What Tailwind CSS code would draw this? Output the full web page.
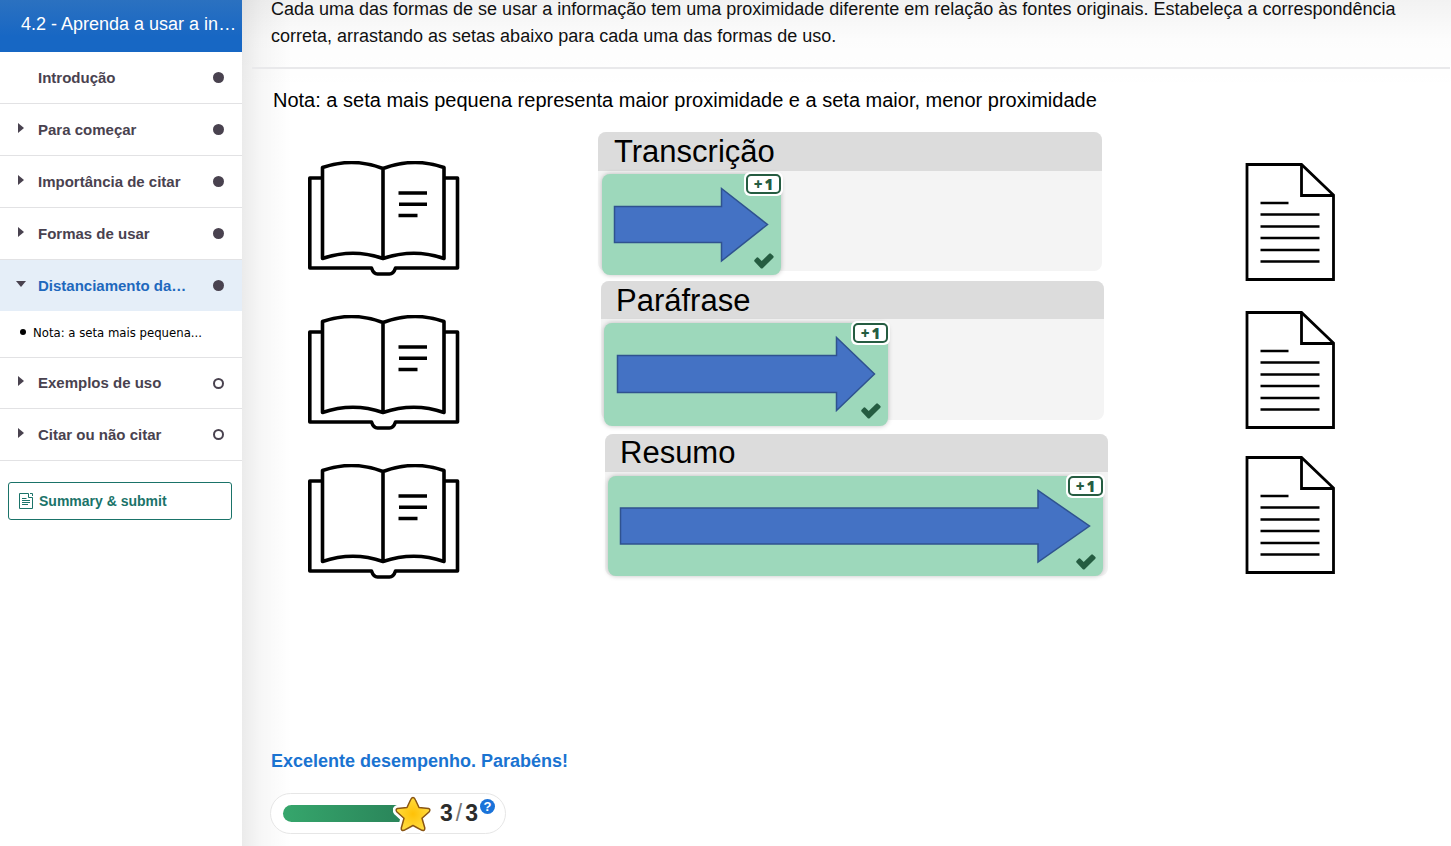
<!DOCTYPE html>
<html lang="pt">
<head>
<meta charset="utf-8">
<meta name="viewport" content="width=device-width, initial-scale=1">
<title>4.2 - Aprenda a usar a informação</title>
<script src="https://cdn.jsdelivr.net/npm/@tailwindcss/browser@4"></script>
</head>
<body class="bg-white font-['Liberation_Sans',Arial,sans-serif] text-black">
<svg class="hidden" aria-hidden="true">
  <symbol id="book" viewBox="0 0 152 116">
    <g fill="none" stroke="#000" stroke-width="3.6" stroke-linejoin="round">
      <path d="M14 17H1.800V107H63.500Q65.500 113 69.500 113H81.500Q85.500 113 87.500 107H149.500V17H136.500"/>
      <path d="M75 7.500Q45 -4 14.500 6.500V97.500Q45 87 75 97.500Q106 87 136 97.500V6.500Q106 -4 75 7.500V97.500"/>
      <path d="M90.500 32H119M91 43.300H119M90.500 54.500H109.500"/>
    </g>
  </symbol>
  <symbol id="doc" viewBox="0 0 90 119">
    <g fill="none" stroke="#000" stroke-width="2.800">
      <path d="M2 1.500H56.500L88.500 32V116.500H2Z"/>
      <path d="M56.500 1.500V32.500H88.500"/>
      <path stroke-width="2.500" d="M15.500 40H43.500M15.500 51.500H74.500M15.500 63.500H74.500M15.500 75H74.500M15.500 87H74.500M15.500 98.500H74.500"/>
    </g>
  </symbol>
  <symbol id="check" viewBox="0 0 20 16"><path fill="#255c41" d="M0.500 8.500Q-.2 7.500 .6 6.800L2.800 4.600Q3.600 4 4.400 4.700L7.700 8L15.200 .7Q16 0 16.900 .7L19.400 3Q20 3.900 19.300 4.800L8.700 15.200Q7.700 16 6.800 15.200Z"/></symbol>
  <symbol id="caret" viewBox="0 0 6 10"><path fill="#49424f" d="M0 0L6 5L0 10Z"/></symbol>
</svg>
<div class="flex min-h-screen">
  <aside class="w-[242px] shrink-0 bg-white">
    <h1 class="flex h-[52px] items-center bg-linear-to-b from-[#2b71c0] to-[#1767c4] to-70% pl-[21px] pb-1 text-lg whitespace-nowrap text-white">4.2 - Aprenda a usar a in…</h1>
    <nav class="text-[15px] font-bold text-[#49424f]">
      <button class="flex h-[52px] w-full items-center border-b border-[#e2e2e4] pr-[18px] text-left"><span class="w-[38px]"></span><span class="flex-1 pt-0.5">Introdução</span><span class="size-[11px] rounded-full bg-[#49424f]"></span></button>
      <button class="flex h-[52px] w-full items-center border-b border-[#e2e2e4] pr-[18px] text-left"><span class="w-[38px] pb-1 pl-[18px]"><svg class="h-2.5 w-1.5"><use href="#caret"/></svg></span><span class="flex-1 pt-0.5">Para começar</span><span class="size-[11px] rounded-full bg-[#49424f]"></span></button>
      <button class="flex h-[52px] w-full items-center border-b border-[#e2e2e4] pr-[18px] text-left"><span class="w-[38px] pb-1 pl-[18px]"><svg class="h-2.5 w-1.5"><use href="#caret"/></svg></span><span class="flex-1 pt-0.5">Importância de citar</span><span class="size-[11px] rounded-full bg-[#49424f]"></span></button>
      <button class="flex h-[52px] w-full items-center border-b border-[#e2e2e4] pr-[18px] text-left"><span class="w-[38px] pb-1 pl-[18px]"><svg class="h-2.5 w-1.5"><use href="#caret"/></svg></span><span class="flex-1 pt-0.5">Formas de usar</span><span class="size-[11px] rounded-full bg-[#49424f]"></span></button>
      <button class="flex h-[51px] w-full items-center bg-[#e5eef8] pr-[18px] text-left text-[#1e68bd]" aria-expanded="true"><span class="w-[38px] pb-1 pl-4"><svg class="h-1.5 w-2.5" viewBox="0 0 10 6"><path fill="#49424f" d="M0 0H10L5 6Z"/></svg></span><span class="flex-1 pt-0.5">Distanciamento da…</span><span class="size-[11px] rounded-full bg-[#49424f]"></span></button>
      <a href="#nota" class="flex h-[47px] items-center gap-[7px] border-b border-[#e2e2e4] pb-1 pl-5 font-['DejaVu_Sans_Condensed','DejaVu_Sans',sans-serif] text-[13px] font-normal text-black"><span class="size-1.5 rounded-full bg-black"></span><span class="pt-px">Nota: a seta mais pequena...</span></a>
      <button class="flex h-[51px] w-full items-center border-b border-[#e2e2e4] pr-[18px] text-left"><span class="w-[38px] pb-1 pl-[18px]"><svg class="h-2.5 w-1.5"><use href="#caret"/></svg></span><span class="flex-1">Exemplos de uso</span><span class="size-[11px] rounded-full border-2 border-[#49424f]"></span></button>
      <button class="flex h-[52px] w-full items-center border-b border-[#e2e2e4] pr-[18px] text-left"><span class="w-[38px] pb-1 pl-[18px]"><svg class="h-2.5 w-1.5"><use href="#caret"/></svg></span><span class="flex-1 pt-0.5">Citar ou não citar</span><span class="size-[11px] rounded-full border-2 border-[#49424f]"></span></button>
    </nav>
    <div class="pt-[21px] pr-2.5 pl-2">
      <button class="flex h-[38px] w-full items-center gap-1.5 rounded-[3px] border border-[#1a7369] pl-2.5 text-sm font-bold text-[#1a7369]">
        <svg class="h-4 w-3.5" viewBox="0 0 14 16" fill="none" stroke="#1a7369"><path d="M9.500 .5H.5V15.500H13.500V4.500M9.500 .5V4.500H13.500M11 .5H13.500V3M3 5.500H7.500M3 7.500H11M3 9.500H11M3 11.500H9"/></svg>
        Summary &amp; submit
      </button>
    </div>
  </aside>

  <main class="min-w-0 flex-1 bg-[linear-gradient(to_right,rgb(0_0_0/0.08),rgb(0_0_0/0.03)_20px,transparent_50px),linear-gradient(to_bottom,rgb(0_0_0/0.05),rgb(0_0_0/0.01)_40px,transparent_90px)]">
    <div class="mr-px ml-2.5 flex h-[69px] items-end border-b-2 border-[#e9e9eb] pb-[17px] pl-[19px]">
      <p class="text-lg leading-[27px] text-[#111]">Cada uma das formas de se usar a informação tem uma proximidade diferente em relação às fontes originais. Estabeleça a correspondência correta, arrastando as setas abaixo para cada uma das formas de uso.</p>
    </div>
    <p id="nota" class="pt-[17px] pl-[31px] text-xl leading-7">Nota: a seta mais pequena representa maior proximidade e a seta maior, menor proximidade</p>

    <section class="mt-[18px] grid h-[600px] grid-cols-[152px_1fr_90px] gap-x-[138px] pr-[116px] pl-[66px]">
      <div class="pt-[29px]">
        <svg class="mb-[38px] h-[116px] w-[152px]"><use href="#book"/></svg>
        <svg class="mb-[33px] h-[116px] w-[152px]"><use href="#book"/></svg>
        <svg class="h-[116px] w-[152px]"><use href="#book"/></svg>
      </div>

      <div>
        <div class="mr-[5px] mb-2.5 h-[139px] rounded-lg bg-[#f4f4f4]">
          <h2 class="flex h-[39px] items-center rounded-t-lg bg-[#dcdcdc] pt-0.5 pl-4 text-[31px]">Transcrição</h2>
          <div class="relative mt-[3px] ml-1 h-[101px] w-[179px] rounded-lg bg-[#9dd8bb] shadow-[0_0_5px_rgb(0_0_0/0.25)]">
            <svg class="size-full" viewBox="0 0 179 101"><path d="M12.500 32.500H119.500V14.500L165.500 50.500L119.500 87V68.500H12.500Z" fill="#4472c4" stroke="#2f528f" stroke-width="1.500"/></svg>
            <span class="absolute -top-0.5 -right-0.5 rounded-md bg-white p-0.5"><span class="flex h-5 w-[35px] items-center justify-center gap-0.5 rounded-[5px] border-2 border-[#255c41] font-['Open_Sans',sans-serif] text-[15px] leading-4 font-extrabold text-[#255c41]"><span>+</span><span>1</span></span></span>
            <svg class="absolute right-[7px] bottom-1.5 h-4 w-5"><use href="#check"/></svg>
          </div>
        </div>
        <div class="mr-[3px] mb-3.5 ml-[3px] h-[139px] rounded-lg bg-[#f4f4f4]">
          <h2 class="flex h-[38px] items-center rounded-t-lg bg-[#dcdcdc] pt-0.5 pl-[15px] text-[31px]">Paráfrase</h2>
          <div class="relative mt-1 ml-[3px] h-[103px] w-[284px] rounded-lg bg-[#9dd8bb] shadow-[0_0_5px_rgb(0_0_0/0.25)]">
            <svg class="size-full" viewBox="0 0 284 103"><path d="M13.500 32.500H232.500V14.500L270.500 51L232.500 87.500V69.500H13.500Z" fill="#4472c4" stroke="#2f528f" stroke-width="1.500"/></svg>
            <span class="absolute -top-0.5 -right-0.5 rounded-md bg-white p-0.5"><span class="flex h-5 w-[35px] items-center justify-center gap-0.5 rounded-[5px] border-2 border-[#255c41] font-['Open_Sans',sans-serif] text-[15px] leading-4 font-extrabold text-[#255c41]"><span>+</span><span>1</span></span></span>
            <svg class="absolute right-[7px] bottom-[7px] h-4 w-5"><use href="#check"/></svg>
          </div>
        </div>
        <div class="-mr-px ml-[7px] h-[142px] rounded-lg bg-[#f4f4f4]">
          <h2 class="flex h-[38px] items-center rounded-t-lg bg-[#dcdcdc] pl-[15px] text-[31px]">Resumo</h2>
          <div class="relative mt-1 mr-[5px] ml-[3px] h-[100px] rounded-lg bg-[#9dd8bb] shadow-[0_0_5px_rgb(0_0_0/0.25)]">
            <svg class="size-full" viewBox="0 0 495 100"><path d="M12.500 32H430V14.500L481.500 50L430 86V68H12.500Z" fill="#4472c4" stroke="#2f528f" stroke-width="1.500"/></svg>
            <span class="absolute -top-0.5 -right-0.5 rounded-md bg-white p-0.5"><span class="flex h-5 w-[35px] items-center justify-center gap-0.5 rounded-[5px] border-2 border-[#255c41] font-['Open_Sans',sans-serif] text-[15px] leading-4 font-extrabold text-[#255c41]"><span>+</span><span>1</span></span></span>
            <svg class="absolute right-[7px] bottom-1.5 h-4 w-5"><use href="#check"/></svg>
          </div>
        </div>
      </div>

      <div class="pt-[31px]">
        <svg class="mb-[29px] h-[119px] w-[90px]"><use href="#doc"/></svg>
        <svg class="mb-[26px] h-[119px] w-[90px]"><use href="#doc"/></svg>
        <svg class="h-[119px] w-[90px]"><use href="#doc"/></svg>
      </div>
    </section>

    <footer class="mt-[17px] pl-7">
      <p class="pl-px text-lg leading-6 font-bold text-[#1a73d1]">Excelente desempenho. Parabéns!</p>
      <div class="mt-5 flex h-[41px] w-[236px] items-center rounded-full border border-[#e6e6e6] bg-white pl-3">
        <div class="h-[17px] w-[118px] rounded-l-full bg-linear-to-r from-[#36a66c] to-[#2a855a]" role="img" aria-label="3 / 3"></div>
        <svg class="-ml-2 h-10 w-10 shrink-0" viewBox="0 0 40 40">
          <defs><radialGradient id="gold"><stop offset="0" stop-color="#ffc107"/><stop offset="1" stop-color="#ffdb3d"/></radialGradient></defs>
          <g stroke-linejoin="round">
            <path d="M20 3.500Q21.500 3.500 22.500 6L26 13.500L35.500 14.500Q38 15.500 36 18L29 24.300L31.800 34Q32 37 29 36.300L20 31.500L11 36.300Q8 37 8.300 34L11 24.300L4 18Q2 15.500 4.500 14.500L14 13.500L17.500 6Q18.500 3.500 20 3.500Z" fill="#fff" stroke="#fff" stroke-width="7"/>
            <path d="M20 3.500Q21.500 3.500 22.500 6L26 13.500L35.500 14.500Q38 15.500 36 18L29 24.300L31.800 34Q32 37 29 36.300L20 31.500L11 36.300Q8 37 8.300 34L11 24.300L4 18Q2 15.500 4.500 14.500L14 13.500L17.500 6Q18.500 3.500 20 3.500Z" fill="url(#gold)" stroke="#8a5513" stroke-width="1.500"/>
          </g>
        </svg>
        <span class="ml-[7px] flex items-center gap-[3px] text-[23px] font-bold text-[#2c2c2c]"><span>3</span><span class="font-normal text-[#777]">/</span><span>3</span></span>
        <button class="mb-3.5 ml-0.5 flex size-[15px] items-center justify-center rounded-full bg-[#1a73d9] text-[13px] leading-none font-bold text-white" aria-label="Ajuda">?</button>
      </div>
    </footer>
  </main>
</div>
</body>
</html>
